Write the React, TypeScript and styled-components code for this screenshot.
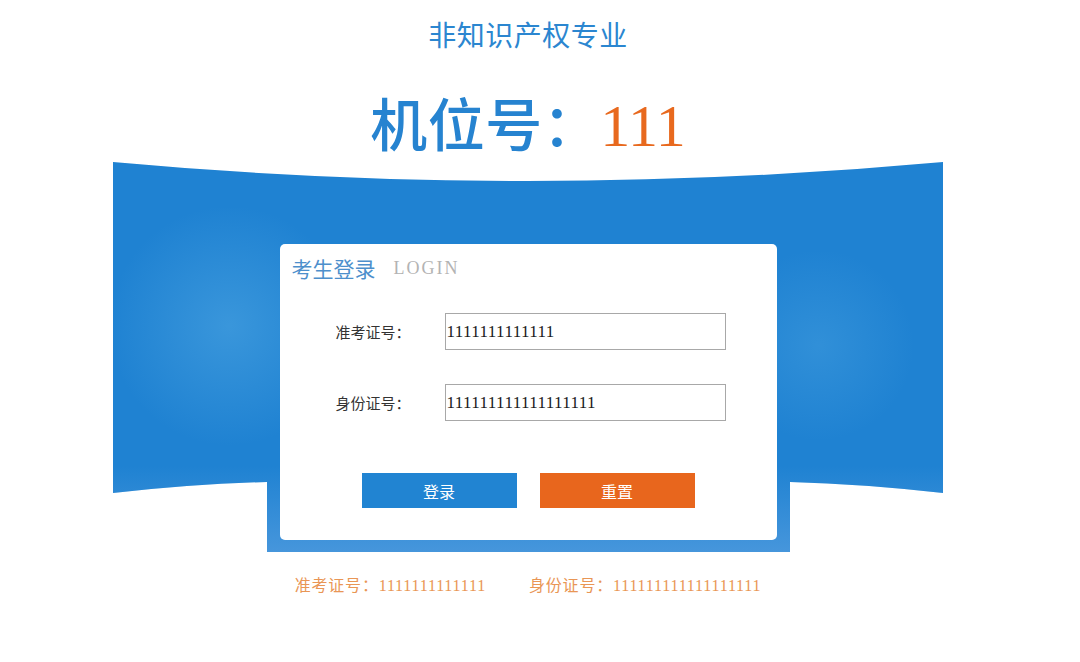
import styled, { createGlobalStyle } from "styled-components";

const GlobalStyle = createGlobalStyle`
  html, body {
    margin: 0;
    padding: 0;
    background: #ffffff;
  }
  body {
    font-family: "Noto Sans CJK SC", "Liberation Serif", serif;
  }
  * {
    box-sizing: border-box;
  }
`;

const cjk = `"Liberation Serif", "Noto Sans CJK SC", serif`;

const App = () => {
  const examNo = "1111111111111";
  const idNo = "111111111111111111";
  const seat = "111";

  return (
    <Page>
      <GlobalStyle />
      <Major>非知识产权专业</Major>
      <Seat>
        机位号：<SeatNo>{seat}</SeatNo>
      </Seat>

      <Stage>
        <Card>
          <CardHead>
            <HeadCn>考生登录</HeadCn>
            <HeadEn>LOGIN</HeadEn>
          </CardHead>

          <Form>
            <Row>
              <Label htmlFor="exam">准考证号：</Label>
              <Field id="exam" defaultValue={examNo} />
            </Row>
            <Row>
              <Label htmlFor="idcard">身份证号：</Label>
              <Field id="idcard" defaultValue={idNo} />
            </Row>
          </Form>

          <Buttons>
            <Button $bg="#2184d2">登录</Button>
            <Button $bg="#e8661d">重置</Button>
          </Buttons>
        </Card>
      </Stage>

      <Info>
        <InfoItem>准考证号：{examNo}</InfoItem>
        <InfoItem>身份证号：{idNo}</InfoItem>
      </Info>
    </Page>
  );
};

export default App;

const Page = styled.main`
  width: 1056px;
  height: 662px;
  display: flex;
  flex-direction: column;
  align-items: center;
  padding-top: 19px;
`;

const Major = styled.h2`
  margin: 0;
  height: 36px;
  line-height: 36px;
  font-size: 28px;
  font-weight: 400;
  color: #2b86d0;
  font-family: ${cjk};
  letter-spacing: 0.5px;
`;

const Seat = styled.h1`
  margin: 36px 0 0;
  height: 71px;
  line-height: 70px;
  font-size: 57px;
  font-weight: 500;
  color: #2683d0;
  font-family: ${cjk};
  letter-spacing: 0.5px;
`;

const SeatNo = styled.span`
  font-family: "Liberation Serif", serif;
  font-weight: 400;
  font-size: 60px;
  letter-spacing: 0;
  color: #e8691e;
`;

const Stage = styled.section`
  width: 830px;
  height: 390px;
  display: flex;
  flex-direction: column;
  justify-content: flex-end;
  align-items: center;
  padding-bottom: 12px;
  background:
    radial-gradient(circle at 14% 42%, rgba(90, 175, 230, 0.45), rgba(90, 175, 230, 0) 16%),
    radial-gradient(circle at 85% 47%, rgba(90, 175, 230, 0.3), rgba(90, 175, 230, 0) 13%),
    linear-gradient(to bottom, rgba(70, 150, 220, 0) 0%, rgba(70, 150, 220, 0) 78%, rgba(80, 155, 222, 0.8) 100%),
    #1f82d2;
  clip-path: path(
    "M0 0 Q415 38 830 0 L830 331 Q750 322 677 320 L677 390 L154 390 L154 320 Q80 322 0 331 Z"
  );
`;

const Card = styled.div`
  width: 497px;
  height: 296px;
  background: #ffffff;
  border-radius: 5px;
  display: flex;
  flex-direction: column;
  padding: 12px 0 32px;
`;

const CardHead = styled.div`
  height: 24px;
  display: flex;
  align-items: center;
  gap: 18px;
  padding-left: 12px;
`;

const HeadCn = styled.span`
  font-size: 21px;
  color: #4d8fcc;
  font-family: ${cjk};
`;

const HeadEn = styled.span`
  font-size: 18px;
  letter-spacing: 2px;
  color: #b3b3b3;
  font-family: "Liberation Serif", serif;
`;

const Form = styled.div`
  margin-top: 33px;
  display: flex;
  flex-direction: column;
  gap: 34px;
  padding-left: 56px;
`;

const Row = styled.div`
  display: flex;
  align-items: center;
  height: 37px;
`;

const Label = styled.label`
  width: 109px;
  font-size: 15px;
  color: #333333;
  font-family: ${cjk};
`;

const Field = styled.input`
  width: 281px;
  height: 37px;
  border: 1px solid #a8a8a8;
  padding: 0 1px;
  font-family: "Liberation Serif", serif;
  font-size: 17px;
  letter-spacing: 0.4px;
  color: #1a1a1a;
  outline: none;
`;

const Buttons = styled.div`
  margin-top: 52px;
  display: flex;
  justify-content: center;
  gap: 23px;
`;

const Button = styled.button<{ $bg: string }>`
  width: 155px;
  height: 35px;
  border: none;
  background: ${({ $bg }) => $bg};
  color: #ffffff;
  font-size: 16px;
  font-family: ${cjk};
  cursor: pointer;
`;

const Info = styled.div`
  margin-top: 23px;
  display: flex;
  gap: 43px;
  height: 22px;
  line-height: 22px;
`;

const InfoItem = styled.span`
  font-size: 16px;
  letter-spacing: 0.8px;
  color: #e99655;
  font-family: ${cjk};
`;
